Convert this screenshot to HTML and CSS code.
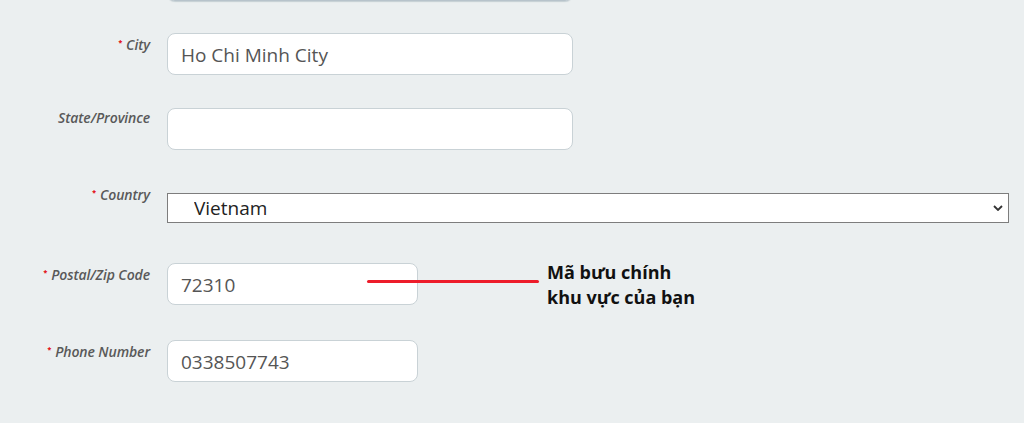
FILE: index.html
```html
<!DOCTYPE html>
<html lang="vi">
<head>
<meta charset="utf-8">
<title>Address form</title>
<link rel="stylesheet" href="styles.css">
</head>
<body>
<form class="form">
  <div class="row row-partial">
    <span class="label"></span>
    <input class="field field-wide" type="text" value="">
  </div>
  <div class="row row-city">
    <label class="label"><span class="req">*</span>City</label>
    <input class="field field-wide" type="text" value="Ho Chi Minh City">
  </div>
  <div class="row row-state">
    <label class="label">State/Province</label>
    <input class="field field-wide" type="text" value="">
  </div>
  <div class="row row-country">
    <label class="label"><span class="req">*</span>Country</label>
    <div class="select-wrap">
      <select class="select"><option>Vietnam</option></select>
      <svg class="chevron" width="10" height="6" viewBox="0 0 10 6"><path d="M1 1l4 4 4-4" fill="none" stroke="#333" stroke-width="1.8"/></svg>
    </div>
  </div>
  <div class="row row-postal">
    <label class="label"><span class="req">*</span>Postal/Zip Code</label>
    <input class="field field-short" type="text" value="72310">
    <div class="note">
      <span class="pointer"></span>
      <p class="note-text">Mã bưu chính<br>khu vực của bạn</p>
    </div>
  </div>
  <div class="row row-phone">
    <label class="label"><span class="req">*</span>Phone Number</label>
    <input class="field field-short" type="text" value="0338507743">
  </div>
</form>
</body>
</html>
```

FILE: styles.css
```css
html, body {
  margin: 0;
  padding: 0;
}
body {
  background: #ebeff0;
  font-family: "Open Sans", "Liberation Sans", sans-serif;
  overflow: hidden;
}
.form {
  display: flex;
  flex-direction: column;
}
.row {
  display: flex;
  align-items: flex-start;
}
.label {
  width: 150px;
  flex: none;
  margin-right: 17px;
  text-align: right;
  font-size: 14px;
  line-height: 16px;
  font-style: italic;
  font-weight: 600;
  color: #595959;
  padding-top: 2px;
  letter-spacing: -0.1px;
}
.req {
  color: #e3141c;
  font-size: 7px;
  font-weight: 800;
  font-style: normal;
  vertical-align: 5px;
  margin-right: 4px;
}
.field {
  box-sizing: border-box;
  height: 42px;
  margin: 0;
  border: 1px solid #c9d2d6;
  border-radius: 8px;
  background: #fff;
  padding: 2px 13px 0;
  font-family: "Open Sans", "Liberation Sans", sans-serif;
  font-size: 19px;
  color: #555;
  outline: none;
}
.field-wide { width: 406px; }
.field-short { width: 251px; }
.row-partial { margin-top: -41px; }
.row-partial .field { border-color: #b7c3cb; box-shadow: 0 1px 1px rgba(140,160,170,0.4); }
.row-city { margin-top: 32px; }
.row-state { margin-top: 33px; }
.row-country { margin-top: 34px; }
.row-country .label { padding-top: 1px; }
.select-wrap {
  position: relative;
  margin-top: 9px;
}
.select {
  appearance: none;
  -webkit-appearance: none;
  box-sizing: border-box;
  width: 842px;
  height: 30px;
  margin: 0;
  border: 1px solid #7d7d7d;
  border-radius: 0;
  background: #fff;
  padding: 0 0 0 26px;
  font-family: "Open Sans", "Liberation Sans", sans-serif;
  font-size: 19px;
  color: #222;
  outline: none;
}
.chevron {
  position: absolute;
  right: 6px;
  top: 12px;
}
.row-postal { margin-top: 40px; }
.row-phone { margin-top: 35px; }
.note {
  position: relative;
  margin-left: 129px;
  margin-top: -3px;
  margin-bottom: -12px;
}
.pointer {
  position: absolute;
  left: -180px;
  top: 20px;
  width: 172px;
  height: 3px;
  border-radius: 2px;
  background: #ed1c2a;
}
.note-text {
  margin: 0;
  font-size: 18px;
  line-height: 25px;
  font-weight: 700;
  color: #111;
  white-space: nowrap;
}
```
